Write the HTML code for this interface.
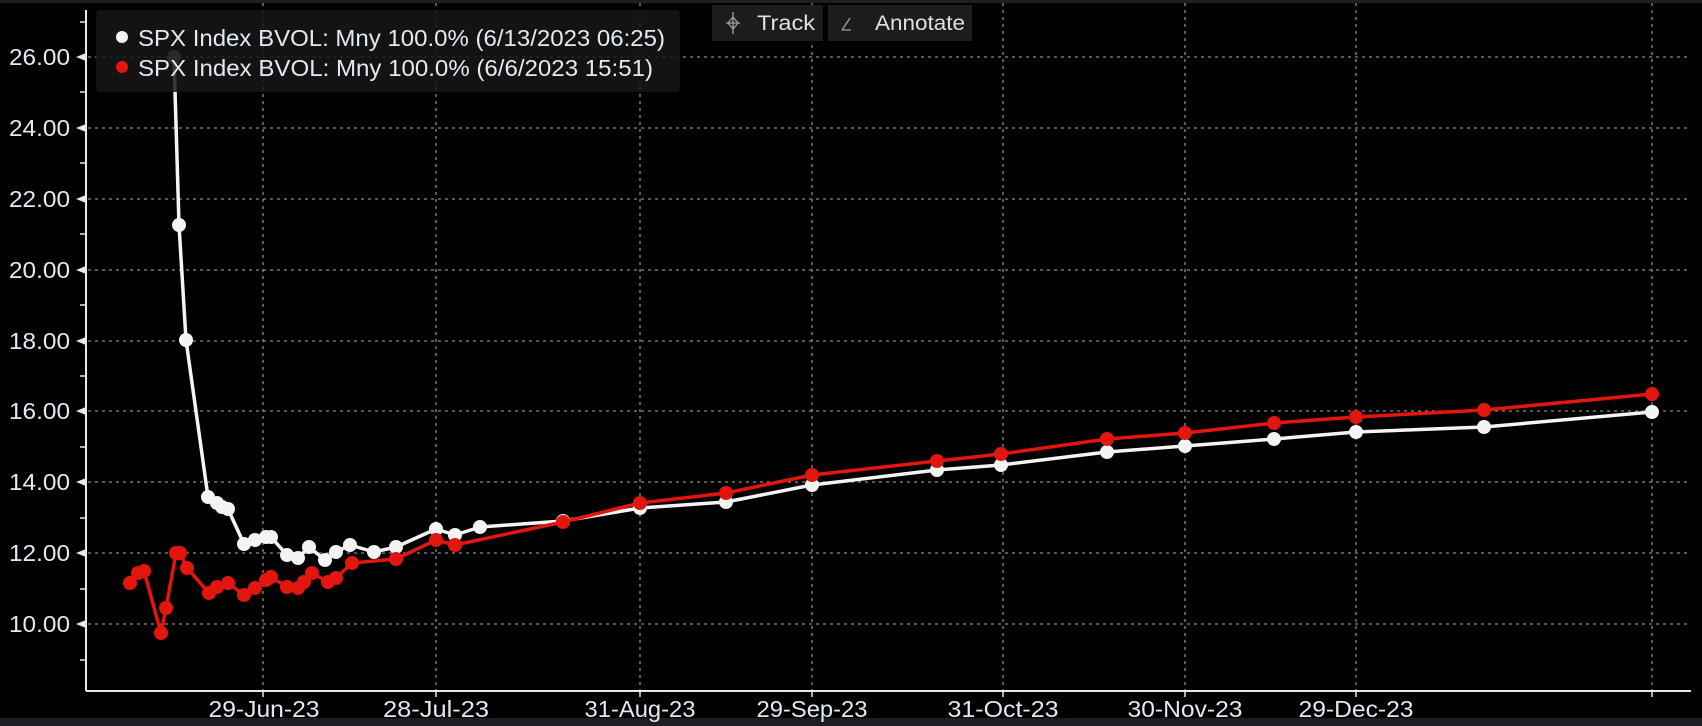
<!DOCTYPE html>
<html><head><style>
html,body{margin:0;padding:0;background:#000;width:1702px;height:726px;overflow:hidden}
svg{display:block}
text{font-family:"Liberation Sans",sans-serif}
</style></head><body>
<svg width="1702" height="726" viewBox="0 0 1702 726" xmlns="http://www.w3.org/2000/svg">
<rect width="1702" height="726" fill="#000"/>
<rect width="1702" height="3" fill="#1c1e22"/>
<rect y="718" width="1702" height="8" fill="#1c1e22"/>
<g stroke="#8a8a8a" stroke-width="1.3" stroke-dasharray="3 4">
<line x1="88" y1="57" x2="1691" y2="57"/>
<line x1="88" y1="128" x2="1691" y2="128"/>
<line x1="88" y1="199" x2="1691" y2="199"/>
<line x1="88" y1="270" x2="1691" y2="270"/>
<line x1="88" y1="341" x2="1691" y2="341"/>
<line x1="88" y1="411" x2="1691" y2="411"/>
<line x1="88" y1="482" x2="1691" y2="482"/>
<line x1="88" y1="553" x2="1691" y2="553"/>
<line x1="88" y1="624" x2="1691" y2="624"/>
<line x1="263" y1="3" x2="263" y2="691"/>
<line x1="436" y1="3" x2="436" y2="691"/>
<line x1="640" y1="3" x2="640" y2="691"/>
<line x1="812" y1="3" x2="812" y2="691"/>
<line x1="1003" y1="3" x2="1003" y2="691"/>
<line x1="1185" y1="3" x2="1185" y2="691"/>
<line x1="1356" y1="3" x2="1356" y2="691"/>
<line x1="1652" y1="3" x2="1652" y2="691"/>
</g>
<g stroke="#e8e8e8" stroke-width="2">
<line x1="86" y1="10" x2="86" y2="691"/>
<line x1="86" y1="691" x2="1691" y2="691"/>
<g stroke-width="1.5">
<line x1="80" y1="22" x2="86" y2="22"/><line x1="80" y1="92" x2="86" y2="92"/><line x1="80" y1="163" x2="86" y2="163"/><line x1="80" y1="234" x2="86" y2="234"/><line x1="80" y1="305" x2="86" y2="305"/><line x1="80" y1="376" x2="86" y2="376"/><line x1="80" y1="447" x2="86" y2="447"/><line x1="80" y1="518" x2="86" y2="518"/><line x1="80" y1="589" x2="86" y2="589"/><line x1="80" y1="660" x2="86" y2="660"/>
<line x1="263" y1="691" x2="263" y2="697"/><line x1="436" y1="691" x2="436" y2="697"/><line x1="640" y1="691" x2="640" y2="697"/><line x1="812" y1="691" x2="812" y2="697"/><line x1="1003" y1="691" x2="1003" y2="697"/><line x1="1185" y1="691" x2="1185" y2="697"/><line x1="1356" y1="691" x2="1356" y2="697"/><line x1="1652" y1="691" x2="1652" y2="697"/>
</g>
</g>
<g fill="#e8e8e8">
<polygon points="76,57 86,53 86,61"/><polygon points="76,128 86,124 86,132"/><polygon points="76,199 86,195 86,203"/><polygon points="76,270 86,266 86,274"/><polygon points="76,341 86,337 86,345"/><polygon points="76,411 86,407 86,415"/><polygon points="76,482 86,478 86,486"/><polygon points="76,553 86,549 86,557"/><polygon points="76,624 86,620 86,628"/>
</g>
<g fill="#e2e9f0" font-size="23" text-anchor="end">
<text x="70" y="65" textLength="61" lengthAdjust="spacingAndGlyphs">26.00</text>
<text x="70" y="136" textLength="61" lengthAdjust="spacingAndGlyphs">24.00</text>
<text x="70" y="207" textLength="61" lengthAdjust="spacingAndGlyphs">22.00</text>
<text x="70" y="278" textLength="61" lengthAdjust="spacingAndGlyphs">20.00</text>
<text x="70" y="349" textLength="61" lengthAdjust="spacingAndGlyphs">18.00</text>
<text x="70" y="419" textLength="61" lengthAdjust="spacingAndGlyphs">16.00</text>
<text x="70" y="490" textLength="61" lengthAdjust="spacingAndGlyphs">14.00</text>
<text x="70" y="561" textLength="61" lengthAdjust="spacingAndGlyphs">12.00</text>
<text x="70" y="632" textLength="61" lengthAdjust="spacingAndGlyphs">10.00</text>
</g>
<g fill="#e2e9f0" font-size="23" text-anchor="middle">
<text x="264" y="717" textLength="111" lengthAdjust="spacingAndGlyphs">29-Jun-23</text>
<text x="436" y="717" textLength="106" lengthAdjust="spacingAndGlyphs">28-Jul-23</text>
<text x="640" y="717" textLength="111" lengthAdjust="spacingAndGlyphs">31-Aug-23</text>
<text x="812" y="717" textLength="111" lengthAdjust="spacingAndGlyphs">29-Sep-23</text>
<text x="1003" y="717" textLength="111" lengthAdjust="spacingAndGlyphs">31-Oct-23</text>
<text x="1185" y="717" textLength="115" lengthAdjust="spacingAndGlyphs">30-Nov-23</text>
<text x="1356" y="717" textLength="115" lengthAdjust="spacingAndGlyphs">29-Dec-23</text>
</g>
<!-- white series -->
<g>
<polyline fill="none" stroke="#f4f4f4" stroke-width="3.5" stroke-linejoin="round" points="174,57 179,225 186,340 208,497 217,503 222,507 228,509 244,544 255,540 266,537 271,537 287,555 298,558 309,547 325,560 336,552 350,545 374,552 396,547 436,529 455,535 480,527 563,521 640,508 726,502 812,485 937,470 1001,465 1107,452 1185,446 1274,439 1356,432 1484,427 1652,412"/>
<g fill="#f4f4f4">
<circle cx="174" cy="57" r="7" fill="#9a9a9a"/><circle cx="179" cy="225" r="7"/><circle cx="186" cy="340" r="7"/><circle cx="208" cy="497" r="7"/><circle cx="217" cy="503" r="7"/><circle cx="222" cy="507" r="7"/><circle cx="228" cy="509" r="7"/><circle cx="244" cy="544" r="7"/><circle cx="255" cy="540" r="7"/><circle cx="266" cy="537" r="7"/><circle cx="271" cy="537" r="7"/><circle cx="287" cy="555" r="7"/><circle cx="298" cy="558" r="7"/><circle cx="309" cy="547" r="7"/><circle cx="325" cy="560" r="7"/><circle cx="336" cy="552" r="7"/><circle cx="350" cy="545" r="7"/><circle cx="374" cy="552" r="7"/><circle cx="396" cy="547" r="7"/><circle cx="436" cy="529" r="7"/><circle cx="455" cy="535" r="7"/><circle cx="480" cy="527" r="7"/><circle cx="563" cy="521" r="7"/><circle cx="640" cy="508" r="7"/><circle cx="726" cy="502" r="7"/><circle cx="812" cy="485" r="7"/><circle cx="937" cy="470" r="7"/><circle cx="1001" cy="465" r="7"/><circle cx="1107" cy="452" r="7"/><circle cx="1185" cy="446" r="7"/><circle cx="1274" cy="439" r="7"/><circle cx="1356" cy="432" r="7"/><circle cx="1484" cy="427" r="7"/><circle cx="1652" cy="412" r="7"/>
</g>
</g>
<!-- red series -->
<g>
<polyline fill="none" stroke="#e3150f" stroke-width="3.5" stroke-linejoin="round" points="130,583 138,573 144,571 161,633 166,608 176,553 180,553 187,568 209,593 217,587 228,583 244,595 255,588 266,580 271,577 287,587 298,588 304,582 312,573 328,582 336,578 352,563 396,559 436,540 455,545 563,522 640,503 726,493 812,475 937,461 1001,454 1107,439 1185,433 1274,423 1356,417 1484,410 1652,394"/>
<g fill="#e3150f">
<circle cx="130" cy="583" r="7"/><circle cx="138" cy="573" r="7"/><circle cx="144" cy="571" r="7"/><circle cx="161" cy="633" r="7"/><circle cx="166" cy="608" r="7"/><circle cx="176" cy="553" r="7"/><circle cx="180" cy="553" r="7"/><circle cx="187" cy="568" r="7"/><circle cx="209" cy="593" r="7"/><circle cx="217" cy="587" r="7"/><circle cx="228" cy="583" r="7"/><circle cx="244" cy="595" r="7"/><circle cx="255" cy="588" r="7"/><circle cx="266" cy="580" r="7"/><circle cx="271" cy="577" r="7"/><circle cx="287" cy="587" r="7"/><circle cx="298" cy="588" r="7"/><circle cx="304" cy="582" r="7"/><circle cx="312" cy="573" r="7"/><circle cx="328" cy="582" r="7"/><circle cx="336" cy="578" r="7"/><circle cx="352" cy="563" r="7"/><circle cx="396" cy="559" r="7"/><circle cx="436" cy="540" r="7"/><circle cx="455" cy="545" r="7"/><circle cx="563" cy="522" r="7"/><circle cx="640" cy="503" r="7"/><circle cx="726" cy="493" r="7"/><circle cx="812" cy="475" r="7"/><circle cx="937" cy="461" r="7"/><circle cx="1001" cy="454" r="7"/><circle cx="1107" cy="439" r="7"/><circle cx="1185" cy="433" r="7"/><circle cx="1274" cy="423" r="7"/><circle cx="1356" cy="417" r="7"/><circle cx="1484" cy="410" r="7"/><circle cx="1652" cy="394" r="7"/>
</g>
</g>
<!-- legend -->
<rect x="96" y="10" width="584" height="82" rx="4" fill="#161616" fill-opacity="0.85"/>
<circle cx="122" cy="37" r="6" fill="#f4f4f4"/>
<circle cx="122" cy="67" r="6" fill="#e3150f"/>
<g fill="#e2e9f0" font-size="23">
<text x="138" y="46" textLength="527" lengthAdjust="spacingAndGlyphs">SPX Index BVOL: Mny 100.0% (6/13/2023 06:25)</text>
<text x="138" y="76" textLength="515" lengthAdjust="spacingAndGlyphs">SPX Index BVOL: Mny 100.0% (6/6/2023 15:51)</text>
</g>
<!-- toolbar -->
<rect x="712" y="5" width="111" height="36" fill="#1c1c1c"/>
<rect x="828" y="5" width="144" height="36" fill="#1c1c1c"/>
<g stroke="#a0a0a0" stroke-width="1.3" fill="none">
<path d="M733 12 V34 M726 23 H740"/>
<path d="M733 17 L738 23 L733 29 L728 23 Z"/>
<path d="M842 30 L850 18 M842 30 H851"/>
</g>
<g fill="#e0e0e0" font-size="21">
<text x="757" y="30" textLength="58" lengthAdjust="spacingAndGlyphs">Track</text>
<text x="875" y="30" textLength="90" lengthAdjust="spacingAndGlyphs">Annotate</text>
</g>
</svg>
</body></html>
